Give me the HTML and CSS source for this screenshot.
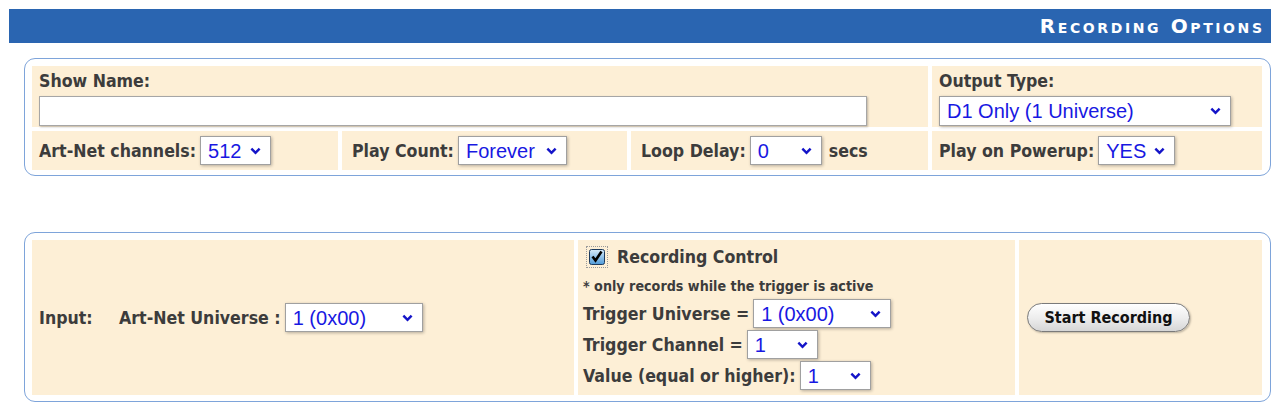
FILE: index.html
```html
<!DOCTYPE html>
<html>
<head>
<meta charset="utf-8">
<link rel="stylesheet" href="styles.css">
</head>
<body>
<div class="page">
  <div class="titlebar"><span class="title">Recording Options</span></div>

  <div class="box">
    <div class="grid grid-top">
      <div class="cell cell-name">
        <div class="lbl">Show Name:</div>
        <input class="txt" type="text" value="">
      </div>
      <div class="cell cell-out">
        <div class="lbl">Output Type:</div>
        <span class="sel sel-out"><select><option>D1 Only (1 Universe)</option></select><svg class="chev" viewBox="0 0 12 8"><path d="M1.5 1.5 L6 6 L10.5 1.5" /></svg></span>
      </div>
      <div class="cell row">
        <span class="lbl">Art-Net channels:</span>
        <span class="sel sel-512"><select><option>512</option></select><svg class="chev" viewBox="0 0 12 8"><path d="M1.5 1.5 L6 6 L10.5 1.5" /></svg></span>
      </div>
      <div class="cell row pad-l">
        <span class="lbl">Play Count:</span>
        <span class="sel sel-forever"><select><option>Forever</option></select><svg class="chev" viewBox="0 0 12 8"><path d="M1.5 1.5 L6 6 L10.5 1.5" /></svg></span>
      </div>
      <div class="cell row pad-l">
        <span class="lbl">Loop Delay:</span>
        <span class="sel sel-0"><select><option>0</option></select><svg class="chev" viewBox="0 0 12 8"><path d="M1.5 1.5 L6 6 L10.5 1.5" /></svg></span>
        <span class="lbl secs">secs</span>
      </div>
      <div class="cell row">
        <span class="lbl">Play on Powerup:</span>
        <span class="sel sel-yes"><select><option>YES</option></select><svg class="chev" viewBox="0 0 12 8"><path d="M1.5 1.5 L6 6 L10.5 1.5" /></svg></span>
      </div>
    </div>
  </div>

  <div class="box box2">
    <div class="grid grid-bottom">
      <div class="cell input-cell">
        <span class="lbl input-lbl">Input:</span>
        <span class="lbl">Art-Net Universe :</span>
        <span class="sel sel-univ"><select><option>1 (0x00)</option></select><svg class="chev" viewBox="0 0 12 8"><path d="M1.5 1.5 L6 6 L10.5 1.5" /></svg></span>
      </div>
      <div class="cell rec-cell">
        <div class="rec-head">
          <span class="cb"><svg viewBox="0 0 16 16" width="16" height="16"><defs><linearGradient id="cbg" x1="0" y1="0" x2="0" y2="1"><stop offset="0" stop-color="#d8ecfb"/><stop offset="1" stop-color="#4f9ad8"/></linearGradient></defs><rect x="0.5" y="0.5" width="15" height="15" rx="2" fill="url(#cbg)" stroke="#1d3b5e"/><path d="M3.5 7.5 L6.5 11.5 L12.5 2.5" fill="none" stroke="#000" stroke-width="2.6"/></svg></span>
          <span class="lbl">Recording Control</span>
        </div>
        <div class="note">* only records while the trigger is active</div>
        <div class="trow">
          <span class="lbl">Trigger Universe =</span>
          <span class="sel sel-tu"><select><option>1 (0x00)</option></select><svg class="chev" viewBox="0 0 12 8"><path d="M1.5 1.5 L6 6 L10.5 1.5" /></svg></span>
        </div>
        <div class="trow">
          <span class="lbl">Trigger Channel =</span>
          <span class="sel sel-tc"><select><option>1</option></select><svg class="chev" viewBox="0 0 12 8"><path d="M1.5 1.5 L6 6 L10.5 1.5" /></svg></span>
        </div>
        <div class="trow">
          <span class="lbl">Value (equal or higher):</span>
          <span class="sel sel-tc"><select><option>1</option></select><svg class="chev" viewBox="0 0 12 8"><path d="M1.5 1.5 L6 6 L10.5 1.5" /></svg></span>
        </div>
      </div>
      <div class="cell btn-cell">
        <button class="btn" type="button">Start Recording</button>
      </div>
    </div>
  </div>
</div>
</body>
</html>
```

FILE: styles.css
```css
html, body {
  margin: 0;
  padding: 0;
  background: #fff;
}
body {
  font-family: "DejaVu Sans Condensed", "DejaVu Sans", sans-serif;
  font-weight: bold;
  font-size: 17.6px;
  color: #3c3c3c;
}
.page {
  padding: 9px 10px 9px 9px;
}
.titlebar {
  height: 34px;
  background: #2a65b1;
  display: flex;
  align-items: center;
  justify-content: flex-end;
  padding-right: 9px;
}
.title {
  color: #fff;
  font-family: "DejaVu Sans", sans-serif;
  font-weight: bold;
  font-variant: small-caps;
  font-size: 20px;
  letter-spacing: 2.6px;
  margin-right: -2.6px;
}
.box {
  margin: 15px 0 0 15px;
  border: 1px solid #7ea4da;
  border-radius: 11px;
  padding: 7px 7px 5px 7px;
}
.box2 {
  margin-top: 56px;
  padding-bottom: 6px;
}
.grid {
  display: grid;
  gap: 4px;
}
.grid-top {
  grid-template-columns: 306px 285px 297px 330px;
  grid-template-rows: 61px 39px;
}
.grid-bottom {
  grid-template-columns: 542px 437px 243px;
  grid-template-rows: 155px;
}
.cell {
  background: #fdefd6;
  padding: 0 7px;
}
.cell-name {
  grid-column: 1 / 4;
  padding-top: 4px;
}
.cell-out {
  padding-top: 4px;
}
.lbl {
  white-space: nowrap;
}
.cell-name .lbl, .cell-out .lbl {
  height: 26px;
  line-height: 22px;
}
.txt {
  display: block;
  box-sizing: border-box;
  width: 828px;
  height: 30px;
  border: 1px solid #a6a6a6;
  box-shadow: 1px 1px 2px rgba(0,0,0,0.25);
  background: #fff;
  margin: 0;
  padding: 0 4px;
}
.row {
  display: flex;
  align-items: center;
  gap: 4px;
}
.pad-l {
  padding-left: 10px;
}
.secs {
  margin-left: 3px;
}
.sel {
  position: relative;
  display: inline-block;
  height: 29px;
  box-sizing: border-box;
  border: 1px solid #a0a0a0;
  box-shadow: 1px 1px 3px rgba(0,0,0,0.28);
  background: #fff;
}
.sel select {
  -webkit-appearance: none;
  appearance: none;
  border: 0;
  outline: 0;
  background: transparent;
  width: 100%;
  height: 100%;
  margin: 0;
  padding: 0 0 0 7px;
  font-family: "Liberation Sans", Arial, sans-serif;
  font-weight: normal;
  font-size: 20px;
  color: #1818e2;
}
.chev {
  position: absolute;
  right: 9px;
  top: 50%;
  margin-top: -4px;
  width: 11px;
  height: 8px;
  pointer-events: none;
}
.chev path {
  fill: none;
  stroke: #1414c8;
  stroke-width: 2.7;
}
.sel-out { width: 292px; height: 30px; }
.sel-512 { width: 71px; }
.sel-forever { width: 109px; }
.sel-0 { width: 72px; }
.sel-yes { width: 77px; }
.sel-univ { width: 138px; }
.sel-tu { width: 138px; }
.sel-tc { width: 71px; }

.input-cell {
  display: flex;
  align-items: center;
}
.input-lbl {
  width: 80px;
}
.input-cell .sel {
  margin-left: 4px;
}
.rec-cell {
  padding: 5px 7px 0 5px;
}
.rec-head {
  display: flex;
  align-items: center;
  height: 24px;
}
.cb {
  display: inline-flex;
  align-items: center;
  justify-content: center;
  width: 22px;
  height: 22px;
  box-sizing: border-box;
  border: 1px dotted #9a9a9a;
  margin-left: 3px;
  margin-right: 9px;
}
.note {
  font-size: 14.2px;
  height: 20px;
  line-height: 20px;
  margin-top: 7px;
  margin-bottom: 2px;
}
.trow {
  display: flex;
  align-items: center;
  gap: 4px;
  height: 31px;
}
.btn-cell {
  display: flex;
  align-items: center;
  padding-left: 8px;
}
.btn {
  width: 163px;
  height: 29px;
  border: 1px solid #7a7a7a;
  border-radius: 15px;
  background: linear-gradient(#ffffff, #ececec 55%, #d6d6d6);
  box-shadow: 1px 1px 2px rgba(0,0,0,0.25);
  font-family: "DejaVu Sans Condensed", "DejaVu Sans", sans-serif;
  font-weight: bold;
  font-size: 16px;
  color: #111;
  padding: 0;
}
```
